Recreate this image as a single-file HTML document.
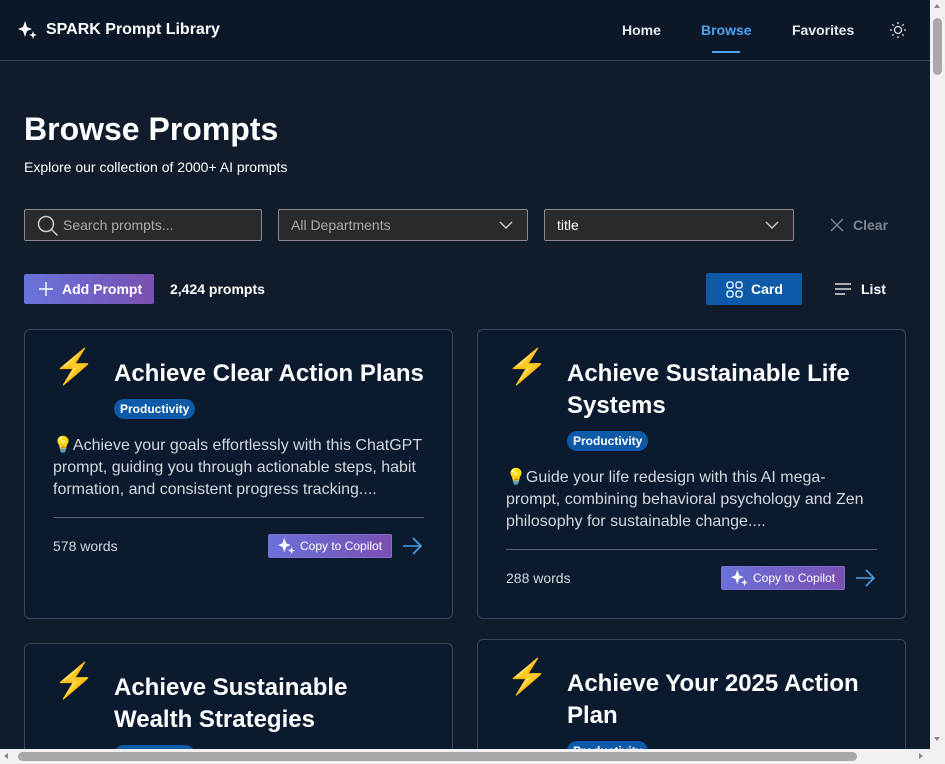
<!DOCTYPE html>
<html style="width:945px;height:764px;overflow:hidden"><head><meta charset="utf-8"><style>
*{box-sizing:border-box;margin:0;padding:0}
body{width:945px;height:764px;overflow:hidden;background:#101b2c;font-family:"Liberation Sans",sans-serif;color:#fff;position:relative}
.hdr{position:absolute;left:0;top:0;width:930px;height:61px;background:#0c1728;border-bottom:1px solid #3a4658}
.logo{position:absolute;left:18px;top:20px;font-weight:bold;font-size:16px;display:flex;align-items:center;gap:8px}
.nav{position:absolute;top:22px;font-weight:bold;font-size:14px;color:#e6e9ee}
h1{position:absolute;left:24px;top:111px;font-size:32px;font-weight:bold}
.sub{position:absolute;left:24px;top:159px;font-size:14px}
.inp{position:absolute;top:209px;height:32px;background:#2a2a2c;border:1px solid #8a8a8a;border-radius:2px;font-size:14px;color:#aaa;display:flex;align-items:center;padding-left:12px}
.chev{position:absolute;right:14px;top:10px}
.card{position:absolute;width:429px;background:#0b1a2f;border:1px solid #3b4658;border-radius:6px;overflow:hidden}
.cut{border-bottom:0;border-radius:6px 6px 0 0}
.bolt{position:absolute;left:28px;top:17px;font-size:34px}
.title{position:absolute;left:89px;font-size:24px;font-weight:bold;line-height:32px;white-space:nowrap}
.tag{position:absolute;left:89px;background:#0f5aa8;border-radius:10px;font-size:12px;font-weight:bold;padding:3px 6px}
.desc{position:absolute;left:28px;font-size:16px;line-height:22px;color:#d4d7dc;white-space:nowrap}
.hr{position:absolute;left:28px;width:371px;border-top:1px solid #5a6371}
.words{position:absolute;left:28px;font-size:14px;color:#d4d7dc}
.copy{position:absolute;left:243px;width:124px;height:24px;background:linear-gradient(90deg,#6a72db,#7a4fb0);border:1px solid #7f6fc9;border-radius:2px;font-size:12px;display:flex;align-items:center;padding-left:9px;gap:4px;white-space:nowrap}
.arr{position:absolute;left:376px}
</style></head><body>
<div class="hdr">
<div class="logo"><svg width="20" height="20" viewBox="0 0 20 20" fill="#fff"><path d="M7 1 L9 7 L14 9 L9 11 L7 17 L5 11 L0 9 L5 7Z"/><path d="M15 11 L16 14 L19 15 L16 16 L15 19 L14 16 L11 15 L14 14Z"/></svg>SPARK Prompt Library</div>
<div class="nav" style="left:622px">Home</div>
<div class="nav" style="left:701px;color:#4da3ef">Browse</div>
<div style="position:absolute;left:712px;top:51px;width:28px;height:2px;background:#4da3ef"></div>
<div class="nav" style="left:792px">Favorites</div>
<svg style="position:absolute;left:889px;top:21px" width="18" height="18" viewBox="0 0 18 18" fill="none" stroke="#ddd" stroke-width="1.3"><circle cx="9" cy="9" r="3.5"/><path d="M9 1v2M9 15v2M1 9h2M15 9h2M3.3 3.3l1.4 1.4M13.3 13.3l1.4 1.4M3.3 14.7l1.4-1.4M13.3 4.7l1.4-1.4"/></svg>
</div>
<h1>Browse Prompts</h1>
<div class="sub">Explore our collection of 2000+ AI prompts</div>
<div class="inp" style="left:24px;width:238px;padding-left:38px"><svg style="position:absolute;left:12px;top:5px" width="22" height="22" viewBox="0 0 22 22" fill="none" stroke="#ccc" stroke-width="1.5"><circle cx="9" cy="9" r="7.5"/><path d="M14.5 14.5l6 6"/></svg>Search prompts...</div>
<div class="inp" style="left:278px;width:250px">All Departments<svg class="chev" width="14" height="10" viewBox="0 0 14 10" fill="none" stroke="#ccc" stroke-width="1.4"><path d="M1 2l6 6 6-6"/></svg></div>
<div class="inp" style="left:544px;width:250px;color:#fff">title<svg class="chev" width="14" height="10" viewBox="0 0 14 10" fill="none" stroke="#ccc" stroke-width="1.4"><path d="M1 2l6 6 6-6"/></svg></div>
<div style="position:absolute;left:829px;top:217px;font-size:14px;font-weight:bold;color:#7d8590;display:flex;gap:8px;align-items:center"><svg width="16" height="16" viewBox="0 0 16 16" stroke="#7d8590" stroke-width="1.4"><path d="M2 2l12 12M14 2L2 14"/></svg>Clear</div>
<div style="position:absolute;left:24px;top:274px;width:130px;height:30px;background:linear-gradient(90deg,#6775dc,#7a4fb0);border-radius:2px;font-size:14px;font-weight:bold;display:flex;align-items:center;padding-left:14px;gap:8px"><svg width="16" height="16" viewBox="0 0 16 16" stroke="#fff" stroke-width="1.4"><path d="M8 1v14M1 8h14"/></svg>Add Prompt</div>
<div style="position:absolute;left:170px;top:281px;font-size:14px;font-weight:bold">2,424 prompts</div>
<div style="position:absolute;left:706px;top:273px;width:96px;height:32px;background:#0f5aa8;border-radius:2px;font-size:14px;font-weight:bold;display:flex;align-items:center;padding-left:20px;gap:8px"><svg width="17" height="17" viewBox="0 0 17 17" fill="none" stroke="#fff" stroke-width="1.3"><rect x="1" y="1" width="6" height="6" rx="2"/><rect x="10" y="1" width="6" height="6" rx="2"/><rect x="1" y="10" width="6" height="6" rx="2"/><rect x="10" y="10" width="6" height="6" rx="2"/></svg>Card</div>
<div style="position:absolute;left:834px;top:281px;font-size:14px;font-weight:bold;display:flex;gap:9px;align-items:center"><svg width="18" height="14" viewBox="0 0 18 14" stroke="#ddd" stroke-width="1.4"><path d="M1 2h16M1 7h16M1 12h10"/></svg>List</div>

<div class="card" style="left:24px;top:329px;height:290px">
<div class="bolt">⚡</div>
<div class="title" style="top:28px">Achieve Clear Action Plans</div>
<div class="tag" style="top:69px">Productivity</div>
<div class="desc" style="top:105px">💡Achieve your goals effortlessly with this ChatGPT<br>prompt, guiding you through actionable steps, habit<br>formation, and consistent progress tracking....</div>
<div class="hr" style="top:187px"></div>
<div class="words" style="top:208px">578 words</div>
<div class="copy" style="top:204px"><svg width="18" height="18" viewBox="0 0 20 20" fill="#fff"><path d="M7 1 L9 7 L14 9 L9 11 L7 17 L5 11 L0 9 L5 7Z"/><path d="M15 11 L16 14 L19 15 L16 16 L15 19 L14 16 L11 15 L14 14Z"/></svg>Copy to Copilot</div>
<svg class="arr" style="top:205px" width="22" height="22" viewBox="0 0 22 22" fill="none" stroke="#4a9fe8" stroke-width="1.6"><path d="M2 11h18M12 3l8 8-8 8"/></svg>
</div>

<div class="card" style="left:477px;top:329px;height:290px">
<div class="bolt">⚡</div>
<div class="title" style="top:28px">Achieve Sustainable Life<br>Systems</div>
<div class="tag" style="top:101px">Productivity</div>
<div class="desc" style="top:137px">💡Guide your life redesign with this AI mega-<br>prompt, combining behavioral psychology and Zen<br>philosophy for sustainable change....</div>
<div class="hr" style="top:219px"></div>
<div class="words" style="top:240px">288 words</div>
<div class="copy" style="top:236px"><svg width="18" height="18" viewBox="0 0 20 20" fill="#fff"><path d="M7 1 L9 7 L14 9 L9 11 L7 17 L5 11 L0 9 L5 7Z"/><path d="M15 11 L16 14 L19 15 L16 16 L15 19 L14 16 L11 15 L14 14Z"/></svg>Copy to Copilot</div>
<svg class="arr" style="top:237px" width="22" height="22" viewBox="0 0 22 22" fill="none" stroke="#4a9fe8" stroke-width="1.6"><path d="M2 11h18M12 3l8 8-8 8"/></svg>
</div>

<div class="card cut" style="left:24px;top:643px;height:106px">
<div class="bolt">⚡</div>
<div class="title" style="top:28px">Achieve Sustainable<br>Wealth Strategies</div>
<div class="tag" style="top:101px">Productivity</div>
</div>
<div class="card cut" style="left:477px;top:639px;height:110px">
<div class="bolt">⚡</div>
<div class="title" style="top:28px">Achieve Your 2025 Action<br>Plan</div>
<div class="tag" style="top:101px">Productivity</div>
</div>

<div style="position:absolute;left:930px;top:0;width:15px;height:749px;background:#f1f1f1"><div style="position:absolute;left:3px;top:18px;width:9px;height:57px;background:#a8a8a8;border-radius:5px"></div><div style="position:absolute;left:4px;top:4px;border:3.5px solid transparent;border-bottom:4px solid #888;border-top:0"></div><div style="position:absolute;left:4px;top:737px;border:3.5px solid transparent;border-top:4px solid #888;border-bottom:0"></div></div>
<div style="position:absolute;left:0;top:749px;width:945px;height:15px;background:#f1f1f1"><div style="position:absolute;left:18px;top:3px;width:839px;height:9px;background:#a8a8a8;border-radius:5px"></div><div style="position:absolute;left:4px;top:4px;border:3.5px solid transparent;border-right:4px solid #888;border-left:0"></div><div style="position:absolute;left:919px;top:4px;border:3.5px solid transparent;border-left:4px solid #888;border-right:0"></div></div>
</body></html>
